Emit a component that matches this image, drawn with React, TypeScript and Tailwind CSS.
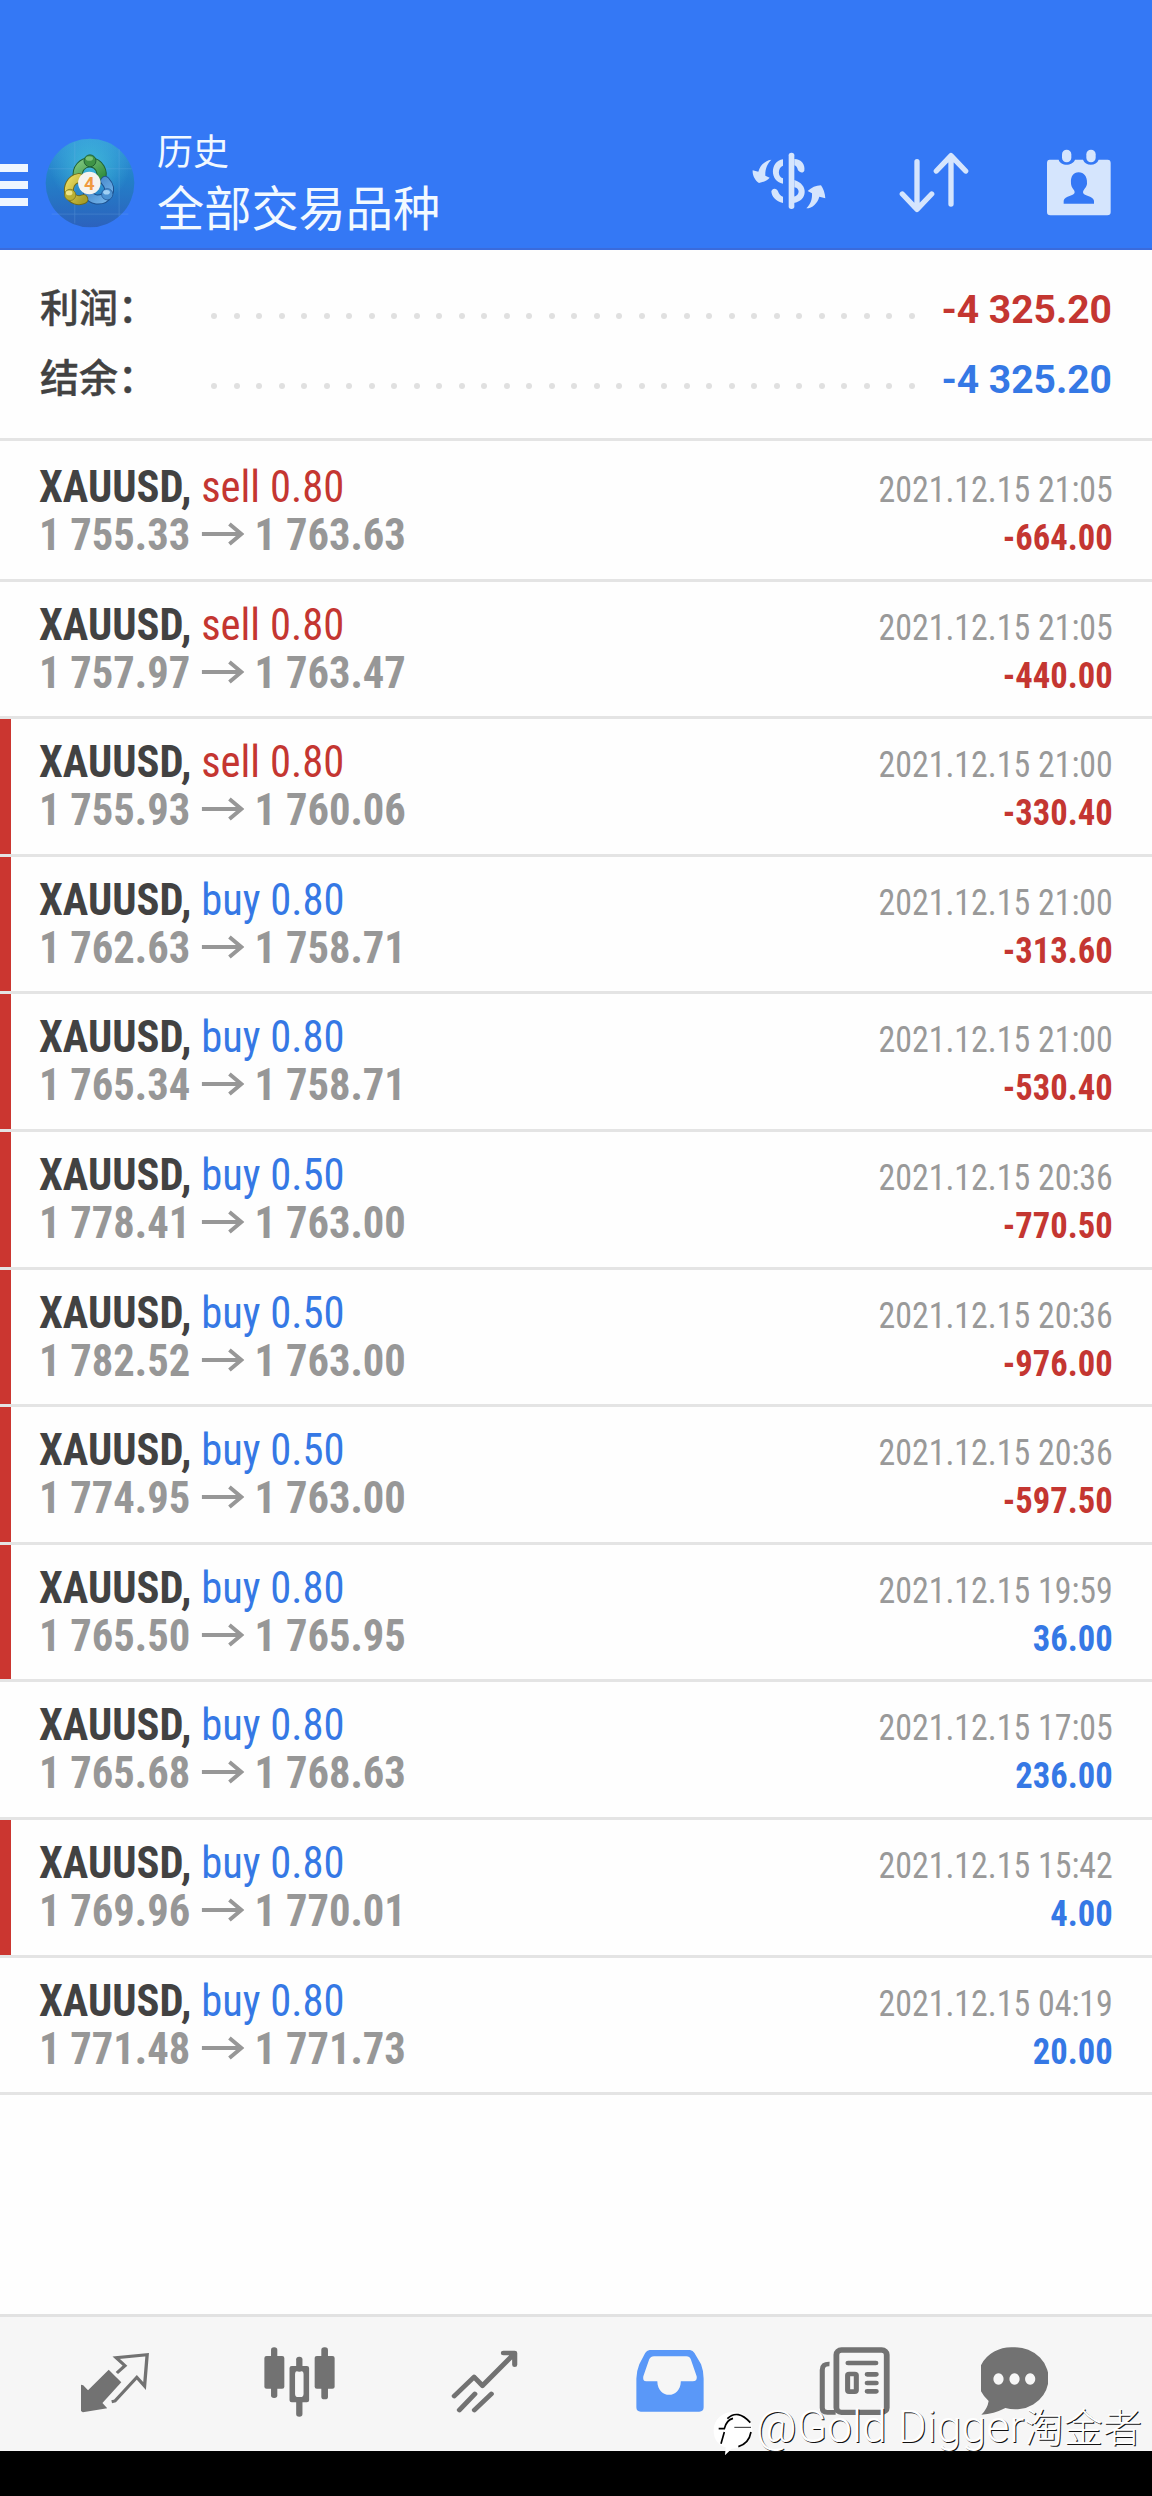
import React from "react";

type Trade = { side: "buy" | "sell"; volume: string; open: string; close: string; time: string; profit: string; marked: boolean };

const TRADES: Trade[] = [
  { side: "sell", volume: "0.80", open: "1 755.33", close: "1 763.63", time: "2021.12.15 21:05", profit: "-664.00", marked: false },
  { side: "sell", volume: "0.80", open: "1 757.97", close: "1 763.47", time: "2021.12.15 21:05", profit: "-440.00", marked: false },
  { side: "sell", volume: "0.80", open: "1 755.93", close: "1 760.06", time: "2021.12.15 21:00", profit: "-330.40", marked: true },
  { side: "buy", volume: "0.80", open: "1 762.63", close: "1 758.71", time: "2021.12.15 21:00", profit: "-313.60", marked: true },
  { side: "buy", volume: "0.80", open: "1 765.34", close: "1 758.71", time: "2021.12.15 21:00", profit: "-530.40", marked: true },
  { side: "buy", volume: "0.50", open: "1 778.41", close: "1 763.00", time: "2021.12.15 20:36", profit: "-770.50", marked: true },
  { side: "buy", volume: "0.50", open: "1 782.52", close: "1 763.00", time: "2021.12.15 20:36", profit: "-976.00", marked: true },
  { side: "buy", volume: "0.50", open: "1 774.95", close: "1 763.00", time: "2021.12.15 20:36", profit: "-597.50", marked: true },
  { side: "buy", volume: "0.80", open: "1 765.50", close: "1 765.95", time: "2021.12.15 19:59", profit: "36.00", marked: true },
  { side: "buy", volume: "0.80", open: "1 765.68", close: "1 768.63", time: "2021.12.15 17:05", profit: "236.00", marked: false },
  { side: "buy", volume: "0.80", open: "1 769.96", close: "1 770.01", time: "2021.12.15 15:42", profit: "4.00", marked: true },
  { side: "buy", volume: "0.80", open: "1 771.48", close: "1 771.73", time: "2021.12.15 04:19", profit: "20.00", marked: false },
];

function AppLogo() {
  return (
    <svg className="ml-[17px] mt-[138px] h-[90px] w-[90px] shrink-0" viewBox="135 82 270 272">
      <defs>
        <linearGradient id="disc" x1="0" y1="0" x2="0" y2="1">
          <stop offset="0" stopColor="#3598da" />
          <stop offset="0.45" stopColor="#2380c8" />
          <stop offset="1" stopColor="#2c62bd" />
        </linearGradient>
        <radialGradient id="glow" cx="0.5" cy="0.3" r="0.45">
          <stop offset="0" stopColor="#43c3dc" stopOpacity="0.8" />
          <stop offset="1" stopColor="#43c3dc" stopOpacity="0" />
        </radialGradient>
        <linearGradient id="green" x1="0" y1="0" x2="1" y2="1">
          <stop offset="0" stopColor="#7cc47a" />
          <stop offset="1" stopColor="#2e8b3d" />
        </linearGradient>
        <linearGradient id="yellow" x1="0" y1="0" x2="1" y2="1">
          <stop offset="0" stopColor="#e6d85c" />
          <stop offset="1" stopColor="#a99f2a" />
        </linearGradient>
        <linearGradient id="azure" x1="0" y1="0" x2="1" y2="1">
          <stop offset="0" stopColor="#3d7fc4" />
          <stop offset="1" stopColor="#74b4ea" />
        </linearGradient>
      </defs>
      <circle cx="270" cy="218" r="134" fill="url(#disc)" />
      <circle cx="270" cy="218" r="134" fill="url(#glow)" />
      <g stroke="#7fb6ea" strokeWidth="2" opacity="0.35">
        <path d="M146 175H396M154 312H386M224 95V340M358 115V320" />
      </g>
      <g fill="none" strokeLinecap="round">
        <path d="M234 200a36 36 0 1 1 68 6" stroke="#1f6134" strokeWidth="31" />
        <path d="M234 200a36 36 0 1 1 68 6" stroke="url(#green)" strokeWidth="25" />
        <path d="M316 212c26 28 4 58-26 56-14-2-22-10-26-18" stroke="#1d4f8d" strokeWidth="30" />
        <path d="M316 212c26 28 4 58-26 56-14-2-22-10-26-18" stroke="url(#azure)" strokeWidth="24" />
        <path d="M236 203c-26 4-32 30-29 44 8 24 30 26 43 20" stroke="#6f6a1c" strokeWidth="30" />
        <path d="M236 203c-26 4-32 30-29 44 8 24 30 26 43 20" stroke="url(#yellow)" strokeWidth="24" />
      </g>
      <circle cx="270" cy="151" r="18" fill="#3f9345" stroke="#1f6134" strokeWidth="3" />
      <ellipse cx="268" cy="144" rx="11" ry="7" fill="#7cc276" />
      <circle cx="210" cy="254" r="17" fill="#b9b034" stroke="#6f6a1c" strokeWidth="2" />
      <ellipse cx="207" cy="248" rx="10" ry="7" fill="#ede588" />
      <circle cx="322" cy="252" r="17" fill="#4c92d2" stroke="#1d4f8d" strokeWidth="2" />
      <ellipse cx="320" cy="246" rx="10" ry="7" fill="#a0d0f4" />
      <circle cx="268" cy="218" r="34" fill="#f5f3ef" />
      <text x="268" y="238" textAnchor="middle" fontFamily="Roboto, sans-serif" fontWeight="700" fontSize="56" fill="#f09a3e">4</text>
    </svg>
  );
}

function Header() {
  return (
    <header className="flex h-[250px] shrink-0 items-start border-b-2 border-[#3a6bdc] bg-[#3478f5]">
      <div className="mt-[164px] flex h-[42px] w-7 shrink-0 flex-col justify-between">
        <div className="h-2 bg-[#eef6ff]" />
        <div className="h-2 bg-[#eef6ff]" />
        <div className="h-2 bg-[#eef6ff]" />
      </div>
      <AppLogo />
      <div className="ml-[22px] mt-[127px] w-[400px] whitespace-nowrap text-[#f2f9ff]">
        <div className="text-[36px] leading-[52px]">历史</div>
        <div className="text-[47.2px] leading-[62px]">全部交易品种</div>
      </div>
      <svg className="ml-[195px] mt-[152px] h-[59px] w-[74px] shrink-0" viewBox="154 97 222 177" fill="#d5e5fd">
        <rect x="264" y="99" width="17" height="169" rx="8" />
        <path d="M247 119C207 124 207 186 247 192V176C230 172 231 143 247 138Z" />
        <path d="M281 118C302 118 314 134 311 153C308 161 297 159 292 152C290 143 286 138 281 137Z" />
        <path d="M281 181C325 194 321 244 279 250V231C299 228 298 205 281 203Z" />
        <path d="M214 211C220 204 229 207 232 215C235 224 240 229 247 231V250C226 246 213 231 212 215Z" />
        <path d="M212 120C194 122 179 136 173 156L156 152C155 166 162 181 175 190C188 187 200 183 207 174L194 168C193 149 200 132 212 120Z" />
        <path d="M317 266C336 266 350 251 356 231L374 236C373 220 368 207 361 197C346 197 332 204 321 214L334 221C335 239 330 254 317 266Z" />
      </svg>
      <svg className="ml-[73px] mt-[152px] h-[61px] w-[70px] shrink-0" viewBox="596 96 210 183" fill="none" stroke="#d5e5fd" strokeWidth="16" strokeLinecap="round" strokeLinejoin="round">
        <path d="M650 125V267M606 222L650 268L694 222M752 252V108M708 153L752 107L796 153" />
      </svg>
      <svg className="ml-[77px] mt-[149px] h-[67px] w-[66px] shrink-0" viewBox="1039 86 198 201" fill="#d5e5fd">
        <path fillRule="evenodd" d="M1050 118H1077C1083 138 1118 138 1126 118H1150C1157 138 1190 138 1197 118H1224Q1233 118 1233 128V276Q1233 285 1223 285H1052Q1042 285 1042 275V128Q1042 118 1050 118ZM1137 156C1121 156 1112 169 1114 189C1114 203 1125 208 1125 216C1125 228 1095 226 1092 241V250H1183V241C1180 226 1150 228 1150 216C1150 208 1162 202 1162 189C1163 169 1153 156 1137 156Z" />
        <rect x="1087" y="88" width="28" height="38" rx="14" />
        <rect x="1160" y="88" width="28" height="38" rx="14" />
      </svg>
    </header>
  );
}

function SummaryRow({ label, value, color }: { label: string; value: string; color: string }) {
  return (
    <div className="flex h-[70px] items-center pl-10 pr-10 font-bold">
      <div className="mb-[2px] w-[171px] whitespace-nowrap text-[39px] font-medium leading-none text-[#424242] [-webkit-text-stroke:0.4px_#424242]">{label}</div>
      <div className="mt-[11px] flex w-[704px] justify-between">
        {Array.from({ length: 32 }, (_, i) => (
          <span key={i} className="size-[6px] rounded-full bg-[#e0e0e0]" />
        ))}
      </div>
      <div className={"ml-auto whitespace-nowrap text-[39px] leading-none " + color}>{value}</div>
    </div>
  );
}

function TradeRow({ t }: { t: Trade }) {
  return (
    <div className="flex h-[137.6px] border-b-[3px] border-[#e4e4e4]">
      <div className={"w-[11px] shrink-0 " + (t.marked ? "bg-[#cb3630]" : "")} />
      <div className="flex flex-1 justify-between whitespace-nowrap pl-[28px] pr-[39px] pt-[19px] [font-stretch:75%]">
        <div className="origin-left scale-x-[0.946] text-[45px] leading-[48px]">
          <div>
            <span className="font-bold text-[#424242]">XAUUSD, </span>
            <span className={t.side === "sell" ? "text-[#c43631]" : "text-[#3578e5]"}>{t.side} {t.volume}</span>
          </div>
          <div className="flex items-center font-bold text-[#979797]">
            {t.open}
            <svg className="ml-[12px] mr-[11px] mt-[-2px] h-[24px] w-[45px]" viewBox="0 0 43 24" preserveAspectRatio="none" fill="none" stroke="#979797" strokeWidth="4">
              <path d="M0 12H40M28 2L40 12L28 22" />
            </svg>
            {t.close}
          </div>
        </div>
        <div className="pt-[3px] text-right text-[37px] leading-[48px]">
          <div className="origin-right scale-x-[0.916] text-[#999]">{t.time}</div>
          <div className={"origin-right scale-x-[0.935] font-bold " + (t.profit.startsWith("-") ? "text-[#c43631]" : "text-[#3578e5]")}>{t.profit}</div>
        </div>
      </div>
    </div>
  );
}

function BottomBar() {
  return (
    <nav className="relative flex h-[137px] shrink-0 items-start border-t-[3px] border-[#e2e2e2] bg-[#f6f6f6]">
      <svg className="ml-[81px] mt-[36px] h-[60px] w-[68px] shrink-0" viewBox="219 159 184 180" preserveAspectRatio="none">
        <path d="M294 209L328 247L277 309L290 325L224 337L219 333V254L225 256L238 271Z" fill="#727272" />
        <path d="M316 219L338 197L314 173L398 164L391 258L370 232L311 303L302 305" fill="none" stroke="#727272" strokeWidth="9" />
      </svg>
      <svg className="ml-[115px] mt-[30px] h-[70px] w-[71px] shrink-0" viewBox="713 140 192 210" preserveAspectRatio="none" fill="#727272">
        <rect x="732" y="141" width="17" height="152" rx="8" />
        <rect x="714" y="167" width="54" height="98" rx="6" />
        <rect x="868" y="141" width="18" height="156" rx="8" />
        <rect x="850" y="167" width="54" height="98" rx="6" />
        <rect x="800" y="169" width="17" height="45" rx="8" />
        <rect x="800" y="296" width="17" height="53" rx="8" />
        <path fillRule="evenodd" d="M788 197H829Q835 197 835 203V300Q835 306 829 306H788Q782 306 782 300V203Q782 197 788 197ZM805 212Q797 212 797 222V280Q797 290 805 290H812Q820 290 820 280V222Q820 212 812 212Z" />
      </svg>
      <svg className="ml-[116px] mt-[33px] h-[63px] w-[67px] shrink-0" viewBox="1217 148 183 189" preserveAspectRatio="none" fill="none" stroke="#727272" strokeWidth="14" strokeLinecap="round" strokeLinejoin="round">
        <path d="M1226 286L1280 229L1303 255L1390 159M1360 157H1391V192M1240 328L1282 280M1281 328L1327 280" />
      </svg>
      <svg className="ml-[118px] mt-[33px] h-[62px] w-[68px] shrink-0" viewBox="153 149 185 187" preserveAspectRatio="none">
        <path fillRule="evenodd" d="M190 149H300Q308 150 312 158L330 192Q337 212 337 235V322Q337 335 325 335H166Q154 335 154 322V235Q154 214 162 192L178 158Q182 150 190 149ZM202 168Q193 168 189 177L173 228Q170 243 181 243H211C212 298 274 298 275 243H307Q321 243 318 228L302 177Q299 168 290 168Z" fill="#5a98f8" />
      </svg>
      <svg className="ml-[115px] mt-[30px] h-[68px] w-[71px] shrink-0" viewBox="654 140 196 204" preserveAspectRatio="none" fill="none" stroke="#727272" strokeWidth="14" strokeLinecap="round">
        <path strokeLinecap="butt" d="M683 191Q663 190 663 209V322Q663 336 677 336H700" />
        <rect x="702" y="149" width="139" height="187" rx="14" strokeWidth="16" />
        <path d="M734 188H811M787 222H812M787 248H812M787 273H812" />
        <rect x="733" y="221" width="24" height="53" rx="4" />
      </svg>
      <svg className="ml-[91px] mt-[30px] h-[68px] w-[67px] shrink-0" viewBox="1097 140 184 204" preserveAspectRatio="none">
        <path fillRule="evenodd" d="M1188 141A92 93 0 1 1 1164 323Q1132 341 1098 343Q1115 325 1118 302A92 93 0 0 1 1188 141ZM1145 219a14 17 0 1 0 0.1 0ZM1189 219a14 17 0 1 0 0.1 0ZM1232 219a14 17 0 1 0 0.1 0Z" fill="#727272" />
      </svg>
      <div className="absolute left-[713px] top-[86px] flex items-start whitespace-nowrap">
        <svg className="mt-[8px] h-[45px] w-[40px]" viewBox="38 33 120 135">
          <path d="M98 36C66 36 40 58 40 92C40 118 54 136 76 142L74 166L94 146C132 146 156 122 156 90C156 58 132 36 98 36Z" fill="#fff" />
          <path d="M81 56Q112 26 150 68M55 86H72Q78 60 98 55M62 131L72 96M152 96Q146 130 114 140" fill="none" stroke="#000" strokeWidth="5" />
          <path d="M102 82H152" stroke="#000" strokeWidth="2.5" />
        </svg>
        <div className="ml-[3px] text-[44.5px] font-light leading-[48px] text-white [text-shadow:1px_1px_0_#111]">
          @Gold Digger<span className="text-[39.3px]">淘金者</span>
        </div>
      </div>
    </nav>
  );
}

export default function App() {
  return (
    <div className="flex h-[2496px] w-[1152px] flex-col overflow-hidden bg-[#fefefe] [font-family:Roboto,'Noto_Sans_CJK_SC',sans-serif]">
      <Header />
      <section className="h-[191px] shrink-0 border-b-[3px] border-[#e4e4e4] pt-[25px]">
        <SummaryRow label="利润：" value="-4 325.20" color="text-[#c43631]" />
        <SummaryRow label="结余：" value="-4 325.20" color="text-[#3578e5]" />
      </section>
      <main className="flex-1 pt-[3px]">
        {TRADES.map((t, i) => (
          <TradeRow key={i} t={t} />
        ))}
      </main>
      <BottomBar />
      <div className="h-[45px] shrink-0 bg-black" />
    </div>
  );
}
